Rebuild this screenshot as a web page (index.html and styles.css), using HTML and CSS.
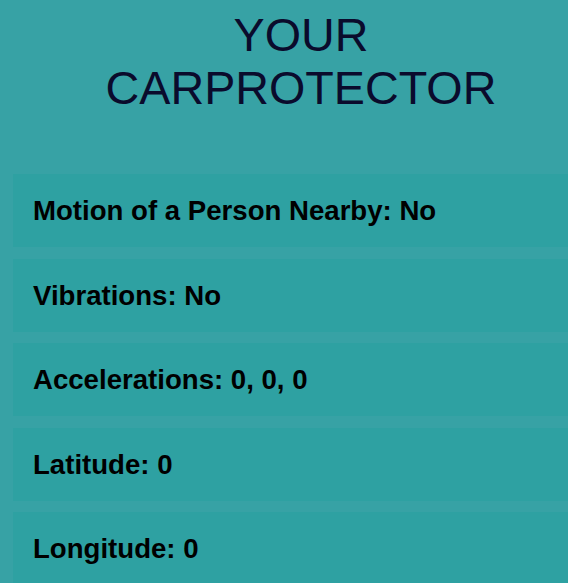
FILE: index.html
```html
<!DOCTYPE html>
<html>
<head>
<meta charset="utf-8">
<link rel="stylesheet" href="styles.css">
</head>
<body>
<div class="page">
  <h1 class="title">YOUR<br>CARPROTECTOR</h1>
  <div class="list">
    <div class="item">Motion of a Person Nearby: No</div>
    <div class="item">Vibrations: No</div>
    <div class="item">Accelerations: 0, 0, 0</div>
    <div class="item">Latitude: 0</div>
    <div class="item">Longitude: 0</div>
  </div>
</div>
</body>
</html>
```
FILE: styles.css
```css
html, body {
  margin: 0;
  padding: 0;
  background: #37a2a5;
  font-family: "Liberation Sans", Arial, sans-serif;
  overflow: hidden;
}
.page {
  padding: 9px 0 0 13px;
}
.title {
  margin: 0;
  padding-left: 21px;
  text-align: center;
  font-size: 46.7px;
  line-height: 53px;
  font-weight: normal;
  color: #0a0b2c;
}
.list {
  margin-top: 59px;
  display: flex;
  flex-direction: column;
  gap: 11.5px;
}
.item {
  background: #2ea1a2;
  padding: 21px 20px 20px 20px;
  font-size: 27.6px;
  line-height: 32px;
  font-weight: bold;
  color: #000;
}
```
